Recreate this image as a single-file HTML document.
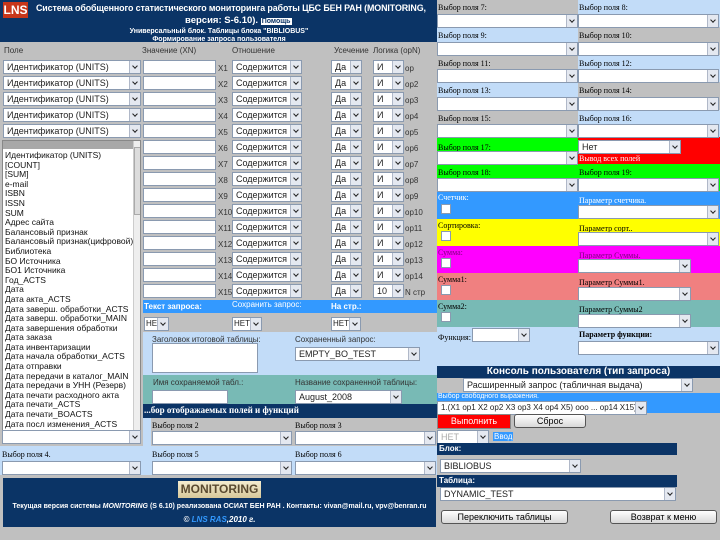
<!DOCTYPE html>
<html><head><meta charset="utf-8"><style>
*{margin:0;padding:0;box-sizing:border-box}
body{width:720px;height:540px;background:#c0c0c0;position:relative;overflow:hidden;font-family:"Liberation Sans",sans-serif;font-size:9px;color:#000}
div,span{position:absolute}
.s{background:#fff;border:1px solid #8a9ab0;height:14px;line-height:12px;padding-left:3px;white-space:nowrap;overflow:hidden;font-size:9px;color:#222}
.s::after{content:"";position:absolute;right:0;top:0;width:10px;height:12px;background:#e4e8f0;border-left:1px solid #b0b8c8}
.s::before{content:"";position:absolute;right:3px;top:3px;width:3px;height:3px;border-right:1.5px solid #222;border-bottom:1.5px solid #222;transform:rotate(45deg);z-index:2}
.i{background:#fff;border:1px solid #8a9ab0;height:14px}
.l{font-size:8px;color:#333;white-space:nowrap}
.b{font-family:"Liberation Serif",serif;font-size:8px;white-space:nowrap}
.nv{background:#0b3466;color:#fff}
.cb{width:10px;height:10px;background:#fff;border:1px solid #8a9ab0}
.btn{border:1px solid #555;border-radius:3px;background:linear-gradient(#fff,#d8d8d8);text-align:center;font-size:9px;line-height:12px;height:14px}
</style></head><body>

<!-- header -->
<div class="nv" style="left:0;top:0;width:438px;height:42px"></div>
<div style="left:3px;top:2px;width:25px;height:16px;background:#c8361a;color:#fff;font-weight:bold;font-size:12px;line-height:16px;text-align:center">LNS</div>
<div style="left:36px;top:3px;color:#fff;font-weight:bold;font-size:8.9px;white-space:nowrap;letter-spacing:-0.1px">Система обобщенного статистического мониторинга работы ЦБС БЕН РАН (MONITORING,</div>
<div style="left:185px;top:15px;color:#fff;font-weight:bold;font-size:9.5px;white-space:nowrap">версия: S-6.10). <span style="position:static;background:#fff;color:#0b3466;font-size:7px;padding:0 1px">Помощь</span></div>
<div style="left:0;width:438px;top:28px;text-align:center;color:#fff;font-weight:bold;font-size:7px">Универсальный блок. Таблицы блока "BIBLIOBUS"</div>
<div style="left:0;width:438px;top:36px;text-align:center;color:#fff;font-weight:bold;font-size:7px">Формирование запроса пользователя</div>

<div class="l" style="left:4px;top:46px">Поле</div>
<div class="l" style="left:142px;top:46px">Значение (XN)</div>
<div class="l" style="left:232px;top:46px">Отношение</div>
<div class="l" style="left:334px;top:46px">Усечение</div>
<div class="l" style="left:373px;top:46px">Логика (opN)</div>

<!-- rows -->
<div class="s" style="left:3px;top:60px;width:138px">Идентификатор (UNITS)</div>
<div class="s" style="left:3px;top:76px;width:138px">Идентификатор (UNITS)</div>
<div class="s" style="left:3px;top:92px;width:138px">Идентификатор (UNITS)</div>
<div class="s" style="left:3px;top:108px;width:138px">Идентификатор (UNITS)</div>
<div class="s" style="left:3px;top:124px;width:138px">Идентификатор (UNITS)</div>

<div class="i" style="left:143px;top:60px;width:73px"></div><div class="l" style="left:218px;top:64px">X1</div><div class="s" style="left:232px;top:60px;width:70px">Содержится</div><div class="s" style="left:331px;top:60px;width:31px">Да</div><div class="s" style="left:373px;top:60px;width:31px">И</div><div class="l" style="left:405px;top:64px">op</div>
<div class="i" style="left:143px;top:76px;width:73px"></div><div class="l" style="left:218px;top:80px">X2</div><div class="s" style="left:232px;top:76px;width:70px">Содержится</div><div class="s" style="left:331px;top:76px;width:31px">Да</div><div class="s" style="left:373px;top:76px;width:31px">И</div><div class="l" style="left:405px;top:80px">op2</div>
<div class="i" style="left:143px;top:92px;width:73px"></div><div class="l" style="left:218px;top:96px">X3</div><div class="s" style="left:232px;top:92px;width:70px">Содержится</div><div class="s" style="left:331px;top:92px;width:31px">Да</div><div class="s" style="left:373px;top:92px;width:31px">И</div><div class="l" style="left:405px;top:96px">op3</div>
<div class="i" style="left:143px;top:108px;width:73px"></div><div class="l" style="left:218px;top:112px">X4</div><div class="s" style="left:232px;top:108px;width:70px">Содержится</div><div class="s" style="left:331px;top:108px;width:31px">Да</div><div class="s" style="left:373px;top:108px;width:31px">И</div><div class="l" style="left:405px;top:112px">op4</div>
<div class="i" style="left:143px;top:124px;width:73px"></div><div class="l" style="left:218px;top:128px">X5</div><div class="s" style="left:232px;top:124px;width:70px">Содержится</div><div class="s" style="left:331px;top:124px;width:31px">Да</div><div class="s" style="left:373px;top:124px;width:31px">И</div><div class="l" style="left:405px;top:128px">op5</div>
<div class="i" style="left:143px;top:140px;width:73px"></div><div class="l" style="left:218px;top:144px">X6</div><div class="s" style="left:232px;top:140px;width:70px">Содержится</div><div class="s" style="left:331px;top:140px;width:31px">Да</div><div class="s" style="left:373px;top:140px;width:31px">И</div><div class="l" style="left:405px;top:144px">op6</div>
<div class="i" style="left:143px;top:156px;width:73px"></div><div class="l" style="left:218px;top:160px">X7</div><div class="s" style="left:232px;top:156px;width:70px">Содержится</div><div class="s" style="left:331px;top:156px;width:31px">Да</div><div class="s" style="left:373px;top:156px;width:31px">И</div><div class="l" style="left:405px;top:160px">op7</div>
<div class="i" style="left:143px;top:172px;width:73px"></div><div class="l" style="left:218px;top:176px">X8</div><div class="s" style="left:232px;top:172px;width:70px">Содержится</div><div class="s" style="left:331px;top:172px;width:31px">Да</div><div class="s" style="left:373px;top:172px;width:31px">И</div><div class="l" style="left:405px;top:176px">op8</div>
<div class="i" style="left:143px;top:188px;width:73px"></div><div class="l" style="left:218px;top:192px">X9</div><div class="s" style="left:232px;top:188px;width:70px">Содержится</div><div class="s" style="left:331px;top:188px;width:31px">Да</div><div class="s" style="left:373px;top:188px;width:31px">И</div><div class="l" style="left:405px;top:192px">op9</div>
<div class="i" style="left:143px;top:204px;width:73px"></div><div class="l" style="left:218px;top:208px">X10</div><div class="s" style="left:232px;top:204px;width:70px">Содержится</div><div class="s" style="left:331px;top:204px;width:31px">Да</div><div class="s" style="left:373px;top:204px;width:31px">И</div><div class="l" style="left:405px;top:208px">op10</div>
<div class="i" style="left:143px;top:220px;width:73px"></div><div class="l" style="left:218px;top:224px">X11</div><div class="s" style="left:232px;top:220px;width:70px">Содержится</div><div class="s" style="left:331px;top:220px;width:31px">Да</div><div class="s" style="left:373px;top:220px;width:31px">И</div><div class="l" style="left:405px;top:224px">op11</div>
<div class="i" style="left:143px;top:236px;width:73px"></div><div class="l" style="left:218px;top:240px">X12</div><div class="s" style="left:232px;top:236px;width:70px">Содержится</div><div class="s" style="left:331px;top:236px;width:31px">Да</div><div class="s" style="left:373px;top:236px;width:31px">И</div><div class="l" style="left:405px;top:240px">op12</div>
<div class="i" style="left:143px;top:252px;width:73px"></div><div class="l" style="left:218px;top:256px">X13</div><div class="s" style="left:232px;top:252px;width:70px">Содержится</div><div class="s" style="left:331px;top:252px;width:31px">Да</div><div class="s" style="left:373px;top:252px;width:31px">И</div><div class="l" style="left:405px;top:256px">op13</div>
<div class="i" style="left:143px;top:268px;width:73px"></div><div class="l" style="left:218px;top:272px">X14</div><div class="s" style="left:232px;top:268px;width:70px">Содержится</div><div class="s" style="left:331px;top:268px;width:31px">Да</div><div class="s" style="left:373px;top:268px;width:31px">И</div><div class="l" style="left:405px;top:272px">op14</div>
<div class="i" style="left:143px;top:284px;width:73px"></div><div class="l" style="left:218px;top:288px">X15</div><div class="s" style="left:232px;top:284px;width:70px">Содержится</div><div class="s" style="left:331px;top:284px;width:31px">Да</div><div class="s" style="left:373px;top:284px;width:31px">10</div><div class="l" style="left:405px;top:288px">N стр</div>

<!-- listbox overlay -->
<div style="left:2px;top:140px;width:139px;height:291px;background:#fff;border:1px solid #888;overflow:hidden">
<div style="left:0;top:0;width:130px;height:8px;background:#a8a8a8"></div>
<div style="left:2px;top:10px;font-size:8.5px;line-height:9.6px;white-space:nowrap;color:#111">Идентификатор (UNITS)<br>[COUNT]<br>[SUM]<br>e-mail<br>ISBN<br>ISSN<br>SUM<br>Адрес сайта<br>Балансовый признак<br>Балансовый признак(цифровой)<br>Библиотека<br>БО Источника<br>БО1 Источника<br>Год_ACTS<br>Дата<br>Дата акта_ACTS<br>Дата заверш. обработки_ACTS<br>Дата заверш. обработки_MAIN<br>Дата завершения обработки<br>Дата заказа<br>Дата инвентаризации<br>Дата начала обработки_ACTS<br>Дата отправки<br>Дата передачи в каталог_MAIN<br>Дата передачи в УНН (Резерв)<br>Дата печати расходного акта<br>Дата печати_ACTS<br>Дата печати_BOACTS<br>Дата посл изменения_ACTS</div>
<div style="left:130px;top:0;width:8px;height:289px;background:#eee;border-left:1px solid #ccc"></div>
<div style="left:131px;top:6px;width:7px;height:68px;background:#dcdcdc;border:1px solid #aaa"></div>
</div>
<div class="s" style="left:2px;top:430px;width:139px"></div>

<!-- query area -->
<div style="left:143px;top:300px;width:294px;height:13px;background:#3399ff"></div>
<div class="l" style="left:144px;top:302px;color:#fff;font-weight:bold">Текст запроса:</div>
<div class="l" style="left:232px;top:300px;color:#fff">Сохранить запрос:</div>
<div class="l" style="left:331px;top:302px;color:#fff;font-weight:bold">На стр.:</div>
<div class="s" style="left:144px;top:317px;width:25px;padding-left:1px;font-size:8px">НЕТ</div>
<div class="s" style="left:232px;top:317px;width:30px;padding-left:1px;font-size:8px">НЕТ</div>
<div class="s" style="left:331px;top:317px;width:30px;padding-left:1px;font-size:8px">НЕТ</div>
<div style="left:143px;top:332px;width:294px;height:43px;background:#c2dcf8"></div>
<div class="l" style="left:152px;top:335px">Заголовок итоговой таблицы:</div>
<div class="i" style="left:152px;top:343px;width:106px;height:30px"></div>
<div class="l" style="left:295px;top:335px">Сохраненный запрос:</div>
<div class="s" style="left:295px;top:347px;width:125px">EMPTY_BO_TEST</div>
<div style="left:143px;top:375px;width:294px;height:29px;background:#78bab5"></div>
<div class="l" style="left:153px;top:378px">Имя сохраняемой табл.:</div>
<div class="i" style="left:152px;top:390px;width:76px"></div>
<div class="l" style="left:295px;top:378px">Название сохраненной таблицы:</div>
<div class="s" style="left:295px;top:390px;width:107px">August_2008</div>
<div class="nv" style="left:143px;top:404px;width:294px;height:14px"></div>
<div class="b" style="left:144px;top:405px;color:#fff;font-weight:bold;font-size:9px">...бор отображаемых полей и функций</div>
<div style="left:143px;top:418px;width:8px;height:28px;background:#c2dcf8"></div>
<div class="b" style="left:152px;top:421px">Выбор поля 2</div>
<div class="s" style="left:152px;top:431px;width:140px"></div>
<div class="b" style="left:295px;top:421px">Выбор поля 3</div>
<div class="s" style="left:295px;top:431px;width:141px"></div>
<div style="left:0;top:446px;width:437px;height:29px;background:#c2dcf8"></div>
<div class="b" style="left:2px;top:450px">Выбор поля 4.</div>
<div class="s" style="left:2px;top:461px;width:139px"></div>
<div class="b" style="left:152px;top:450px">Выбор поля 5</div>
<div class="s" style="left:152px;top:461px;width:140px"></div>
<div class="b" style="left:295px;top:450px">Выбор поля 6</div>
<div class="s" style="left:295px;top:461px;width:141px"></div>

<!-- footer -->
<div class="nv" style="left:3px;top:478px;width:433px;height:49px"></div>
<div style="left:178px;top:481px;width:83px;height:17px;background:linear-gradient(#f4ecd0,#d8c89a);color:#5a4a30;font-weight:bold;font-size:12px;line-height:17px;text-align:center">MONITORING</div>
<div style="left:3px;width:433px;top:503px;text-align:center;color:#fff;font-size:7px;font-weight:bold;white-space:nowrap">Текущая версия системы <i>MONITORING</i> (S 6.10) реализована ОСИАТ БЕН РАН . Контакты: vivan@mail.ru, vpv@benran.ru</div>
<div style="left:3px;width:433px;top:515px;text-align:center;color:#fff;font-size:8px;font-weight:bold;font-style:italic">© <span style="position:static;color:#3399ff">LNS RAS</span>,2010 г.</div>

<!-- right panel -->
<div style="left:437px;top:0;width:141px;height:27px;background:#c0c0c0"></div><div style="left:578px;top:0;width:142px;height:27px;background:#c2dcf8"></div>
<div style="left:437px;top:27px;width:141px;height:28px;background:#c2dcf8"></div><div style="left:578px;top:27px;width:142px;height:28px;background:#c0c0c0"></div>
<div style="left:437px;top:55px;width:141px;height:27px;background:#c0c0c0"></div><div style="left:578px;top:55px;width:142px;height:27px;background:#c2dcf8"></div>
<div style="left:437px;top:82px;width:141px;height:28px;background:#c2dcf8"></div><div style="left:578px;top:82px;width:142px;height:28px;background:#c0c0c0"></div>
<div style="left:437px;top:110px;width:141px;height:27px;background:#c0c0c0"></div><div style="left:578px;top:110px;width:142px;height:27px;background:#c2dcf8"></div>
<div style="left:437px;top:137px;width:141px;height:27px;background:#00ff00"></div><div style="left:578px;top:137px;width:142px;height:27px;background:#ff0000"></div>
<div style="left:437px;top:164px;width:283px;height:27px;background:#00ff00"></div>
<div style="left:437px;top:191px;width:283px;height:28px;background:#3399ff"></div>
<div style="left:437px;top:219px;width:283px;height:27px;background:#ffff00"></div>
<div style="left:437px;top:246px;width:283px;height:27px;background:#ff00ff"></div>
<div style="left:437px;top:273px;width:283px;height:27px;background:#f08080"></div>
<div style="left:437px;top:300px;width:283px;height:27px;background:#78bab5"></div>
<div style="left:437px;top:327px;width:283px;height:39px;background:#c2dcf8"></div>

<div class="b" style="left:438px;top:3px">Выбор поля 7:</div><div class="s" style="left:437px;top:14px;width:141px"></div>
<div class="b" style="left:579px;top:3px">Выбор поля 8:</div><div class="s" style="left:578px;top:14px;width:141px"></div>
<div class="b" style="left:438px;top:31px">Выбор поля 9:</div><div class="s" style="left:437px;top:42px;width:141px"></div>
<div class="b" style="left:579px;top:31px">Выбор поля 10:</div><div class="s" style="left:578px;top:42px;width:141px"></div>
<div class="b" style="left:438px;top:59px">Выбор поля 11:</div><div class="s" style="left:437px;top:69px;width:141px"></div>
<div class="b" style="left:579px;top:59px">Выбор поля 12:</div><div class="s" style="left:578px;top:69px;width:141px"></div>
<div class="b" style="left:438px;top:86px">Выбор поля 13:</div><div class="s" style="left:437px;top:97px;width:141px"></div>
<div class="b" style="left:579px;top:86px">Выбор поля 14:</div><div class="s" style="left:578px;top:97px;width:141px"></div>
<div class="b" style="left:438px;top:114px">Выбор поля 15:</div><div class="s" style="left:437px;top:124px;width:141px"></div>
<div class="b" style="left:579px;top:114px">Выбор поля 16:</div><div class="s" style="left:578px;top:124px;width:141px"></div>
<div class="b" style="left:438px;top:143px">Выбор поля 17:</div><div class="s" style="left:437px;top:151px;width:141px"></div>
<div class="s" style="left:578px;top:140px;width:103px">Нет</div>
<div class="b" style="left:579px;top:154px;color:#fff">Вывод всех полей</div>
<div class="b" style="left:438px;top:168px">Выбор поля 18:</div><div class="s" style="left:437px;top:178px;width:141px"></div>
<div class="b" style="left:579px;top:168px">Выбор поля 19:</div><div class="s" style="left:578px;top:178px;width:141px"></div>
<div class="b" style="left:438px;top:193px;color:#fff">Счетчик:</div><div class="cb" style="left:441px;top:204px"></div>
<div class="b" style="left:579px;top:196px;color:#fff">Параметр счетчика.</div><div class="s" style="left:578px;top:205px;width:141px"></div>
<div class="b" style="left:438px;top:221px">Сортировка:</div><div class="cb" style="left:441px;top:231px"></div>
<div class="b" style="left:579px;top:224px">Параметр сорт..</div><div class="s" style="left:578px;top:232px;width:141px"></div>
<div class="b" style="left:438px;top:248px;color:#800080">Сумма:</div><div class="cb" style="left:441px;top:258px"></div>
<div class="b" style="left:579px;top:251px;color:#800080">Параметр Суммы.</div><div class="s" style="left:578px;top:259px;width:113px"></div>
<div class="b" style="left:438px;top:275px">Сумма1:</div><div class="cb" style="left:441px;top:285px"></div>
<div class="b" style="left:579px;top:278px">Параметр Суммы1.</div><div class="s" style="left:578px;top:287px;width:113px"></div>
<div class="b" style="left:438px;top:302px">Сумма2:</div><div class="cb" style="left:441px;top:312px"></div>
<div class="b" style="left:579px;top:305px">Параметр Суммы2</div><div class="s" style="left:578px;top:314px;width:113px"></div>
<div class="b" style="left:438px;top:333px">Функция:</div><div class="s" style="left:472px;top:328px;width:58px"></div>
<div class="b" style="left:579px;top:330px;font-weight:bold">Параметр функции:</div><div class="s" style="left:578px;top:341px;width:141px"></div>

<div class="nv" style="left:437px;top:366px;width:283px;height:12px;text-align:center;font-weight:bold;font-size:10px;line-height:12px">Консоль пользователя (тип запроса)</div>
<div class="s" style="left:463px;top:378px;width:230px">Расширенный запрос (табличная выдача)</div>
<div style="left:437px;top:393px;width:283px;height:20px;background:#3399ff"></div>
<div class="l" style="left:438px;top:393px;color:#fff;font-size:7px">Выбор свободного выражения.</div>
<div class="s" style="left:437px;top:401px;width:210px;font-size:8px">1.(X1 op1 X2 op2 X3 op3 X4 op4 X5) ооо ... op14 X15)</div>
<div style="left:437px;top:414px;width:74px;height:15px;background:#ff0000;border:1px solid #888;color:#fff;text-align:center;line-height:13px;font-size:9px">Выполнить</div>
<div class="btn" style="left:514px;top:414px;width:72px">Сброс</div>
<div class="s" style="left:437px;top:430px;width:52px;color:#aaa">НЕТ</div>
<div style="left:493px;top:432px;background:#3399ff;color:#fff;font-size:8px;padding:0 1px">Ввод</div>
<div class="nv" style="left:437px;top:443px;width:240px;height:12px;font-size:8px;font-weight:bold;padding-left:2px;line-height:12px">Блок:</div>
<div class="s" style="left:440px;top:459px;width:141px">BIBLIOBUS</div>
<div class="nv" style="left:437px;top:475px;width:240px;height:12px;font-size:8px;font-weight:bold;padding-left:2px;line-height:12px">Таблица:</div>
<div class="s" style="left:440px;top:487px;width:236px">DYNAMIC_TEST</div>
<div class="btn" style="left:441px;top:510px;width:127px">Переключить таблицы</div>
<div class="btn" style="left:610px;top:510px;width:107px">Возврат к меню</div>
</body></html>
